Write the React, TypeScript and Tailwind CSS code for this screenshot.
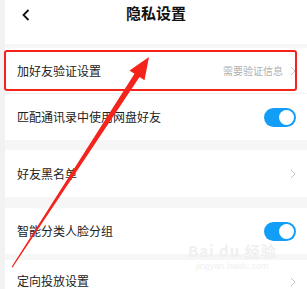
import React from "react";

const font = { fontFamily: '"Noto Sans CJK SC", "Noto Sans", sans-serif' };

function Chevron() {
  return (
    <svg width="6" height="10" viewBox="0 0 6 10" className="shrink-0">
      <path d="M1 1 L5 5 L1 9" fill="none" stroke="#c4c4c4" strokeWidth="1" />
    </svg>
  );
}

function Toggle() {
  return (
    <div className="w-[32px] h-[19px] rounded-full bg-[#129ef6] flex items-center justify-end pr-[2px] shrink-0">
      <div className="w-[15px] h-[15px] rounded-full bg-white" />
    </div>
  );
}

export default function App() {
  return (
    <div
      className="relative w-[307px] h-[289px] overflow-hidden bg-[#f5f5f5] flex"
      style={font}
    >
      <div className="w-[5px] shrink-0 bg-[#f2f2f2]" />
      <div className="flex-1 flex flex-col bg-[#f6f6f6]">
        <div className="h-[44px] shrink-0 bg-white relative flex items-start justify-center pt-[4px]">
          <svg
            width="8"
            height="12"
            viewBox="0 0 8 12"
            className="absolute left-[17px] top-[9px]"
          >
            <path d="M6.5 1 L1.5 6 L6.5 11" fill="none" stroke="#111" strokeWidth="1.8" />
          </svg>
          <span className="text-[15px] font-bold text-[#111] leading-[18px]">隐私设置</span>
        </div>
        <div className="h-[4px] shrink-0" />
        <div className="h-[45px] shrink-0 bg-white flex items-center pl-[12px] pr-[11px]">
          <span className="flex-1 text-[12px] text-[#222]">加好友验证设置</span>
          <span className="text-[10px] text-[#b0b0b0] mr-[7px]">需要验证信息</span>
          <Chevron />
        </div>
        <div className="h-px shrink-0 bg-[#f3f3f3]" />
        <div className="h-[46px] shrink-0 bg-white flex items-center pl-[12px] pr-[11px]">
          <span className="flex-1 text-[12px] text-[#222]">匹配通讯录中使用网盘好友</span>
          <Toggle />
        </div>
        <div className="h-[10px] shrink-0" />
        <div className="h-[47px] shrink-0 bg-white flex items-center pl-[12px] pr-[11px]">
          <span className="flex-1 text-[12px] text-[#222]">好友黑名单</span>
          <Chevron />
        </div>
        <div className="h-[11px] shrink-0" />
        <div className="h-[46px] shrink-0 bg-white flex items-center pl-[12px] pr-[11px]">
          <span className="flex-1 text-[12px] text-[#222]">智能分类人脸分组</span>
          <Toggle />
        </div>
        <div className="h-[6px] shrink-0" />
        <div className="h-[40px] shrink-0 bg-white flex items-start pt-[13px] pl-[12px] pr-[11px]">
          <span className="flex-1 text-[12px] leading-[16px] text-[#222]">定向投放设置</span>
          <div className="pt-[4px]"><Chevron /></div>
        </div>
      </div>

      {/* watermark */}
      <div className="absolute left-[188px] top-[243px] flex flex-col items-center pointer-events-none">
        <div className="text-[15px] font-bold text-[#f0f0f0] leading-[16px] tracking-[1px]">Bai du 经验</div>
        <div className="text-[9px] text-[#f0f0f0] leading-[10px] mt-[2px]" style={{ fontFamily: '"Liberation Sans", sans-serif' }}>jingyan.baidu.com</div>
      </div>

      {/* red highlight box */}
      <div className="absolute left-[4px] top-[50px] w-[293px] h-[41px] border-2 border-[#f4221a] rounded-[3px] pointer-events-none" />

      {/* red arrow */}
      <svg className="absolute left-0 top-0 pointer-events-none" width="307" height="289" viewBox="0 0 307 289">
        <polygon
          points="11.5,267 12.5,267.5 139.5,77 144.5,80.3 149,57 129.5,70.5 134.5,73.8"
          fill="#f4231b"
        />
      </svg>
    </div>
  );
}
